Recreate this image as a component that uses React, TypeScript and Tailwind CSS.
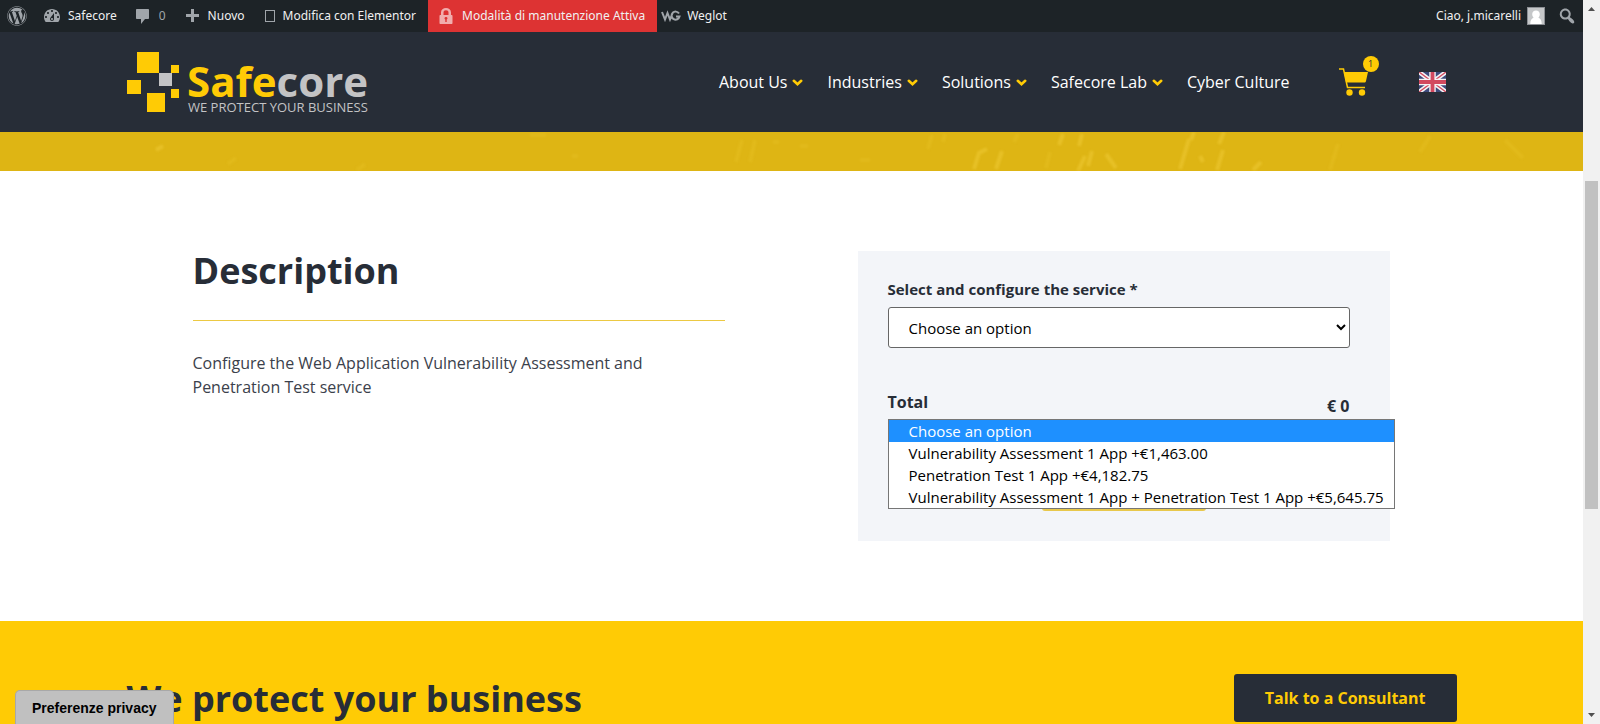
import React from 'react';
import { FaWordpress } from 'react-icons/fa';

const navLinks = [
    { label: 'About Us', hasMenu: true },
    { label: 'Industries', hasMenu: true },
    { label: 'Solutions', hasMenu: true },
    { label: 'Safecore Lab', hasMenu: true },
    { label: 'Cyber Culture', hasMenu: false },
];

const serviceOptions = [
    'Choose an option',
    'Vulnerability Assessment 1 App +€1,463.00',
    'Penetration Test 1 App +€4,182.75',
    'Vulnerability Assessment 1 App + Penetration Test 1 App +€5,645.75',
];

const dashicons = {
    dashboard:
        'M3.76 16h12.48c1.1-1.37 1.76-3.11 1.76-5 0-4.42-3.58-8-8-8s-8 3.58-8 8c0 1.89.66 3.63 1.76 5zM10 4c.55 0 1 .45 1 1s-.45 1-1 1-1-.45-1-1 .45-1 1-1zM6 6c.55 0 1 .45 1 1s-.45 1-1 1-1-.45-1-1 .45-1 1-1zm8 0c.55 0 1 .45 1 1s-.45 1-1 1-1-.45-1-1 .45-1 1-1zm-5.37 5.55L12 7v6c0 1.1-.9 2-2 2s-2-.9-2-2c0-.57.24-1.08.63-1.45zM4 10c.55 0 1 .45 1 1s-.45 1-1 1-1-.45-1-1 .45-1 1-1zm12 0c.55 0 1 .45 1 1s-.45 1-1 1-1-.45-1-1 .45-1 1-1zm-5 3c0-.55-.45-1-1-1s-1 .45-1 1 .45 1 1 1 1-.45 1-1z',
    comment: 'M4 3h11c.6 0 1 .4 1 1v8c0 .6-.4 1-1 1h-3l-4 5v-5H4c-.6 0-1-.4-1-1V4c0-.6.4-1 1-1z',
    plus: 'M17 8v3h-5v5H9v-5H4V8h5V3h3v5h5z',
    search:
        'M12.14 4.18c1.87 1.87 2.11 4.75.72 6.89.12.1.22.21.36.31.2.16.47.36.81.59.34.24.56.39.66.47.42.31.73.57.94.78.32.32.6.65.84 1 .25.35.44.69.59 1.04.14.35.21.68.18 1-.02.32-.14.59-.36.81s-.49.34-.81.36c-.31.02-.65-.04-.99-.19-.35-.14-.7-.34-1.04-.59-.35-.24-.68-.52-1-.84-.21-.21-.47-.52-.77-.93-.1-.13-.25-.35-.47-.66-.22-.32-.4-.57-.56-.78-.16-.2-.29-.35-.44-.5-2.07 1.09-4.69.76-6.44-.98-2.14-2.15-2.14-5.64 0-7.78 2.15-2.15 5.63-2.15 7.78 0zm-1.41 6.36c1.36-1.37 1.36-3.58 0-4.95-1.37-1.37-3.59-1.37-4.95 0-1.37 1.37-1.37 3.58 0 4.95 1.36 1.37 3.58 1.37 4.95 0z',
};

function Dashicon({ name }: { name: keyof typeof dashicons }) {
    return (
        <svg viewBox="0 0 20 20" className="h-5 w-5 shrink-0 fill-[#a0a5aa]" aria-hidden="true">
            <path d={dashicons[name]} fillRule="evenodd" />
        </svg>
    );
}

function AdminBar() {
    return (
        <div className="flex h-8 items-center bg-[#1d2327] pl-[7px] pr-1.5 font-['Noto_Sans','Open_Sans',sans-serif] text-xs text-[#f0f0f1]">
            <a href="#wordpress" aria-label="WordPress" className="mr-[15px]">
                <FaWordpress className="h-5 w-5 text-[#a0a5aa]" />
            </a>
            <a href="#site" className="mr-4 flex items-center gap-1.5">
                <Dashicon name="dashboard" />
                Safecore
            </a>
            <a href="#comments" className="mr-4 flex items-center gap-1.5 text-[#a0a5aa]">
                <Dashicon name="comment" />
                0
            </a>
            <a href="#new" className="mr-5 flex items-center gap-1.5">
                <Dashicon name="plus" />
                Nuovo
            </a>
            <a href="#elementor" className="mr-3 flex items-center gap-2">
                <span className="h-3 w-2.5 border border-[#a0a5aa]" />
                Modifica con Elementor
            </a>
            <a href="#maintenance" className="flex h-8 items-center gap-1.5 bg-[#dd3333] pr-3 pl-2">
                <svg viewBox="0 0 20 20" className="h-5 w-5 fill-[#f1adad]" aria-hidden="true">
                    <path
                        fillRule="evenodd"
                        d="M4.500 9H5V6.500C5 3.500 7.200 2 10 2s5 1.500 5 4.500V9h.5c.6 0 1 .4 1 1v7c0 .6-.4 1-1 1h-11c-.6 0-1-.4-1-1v-7c0-.6.4-1 1-1zm3 0h5V6.500c0-1.500-1-2.300-2.500-2.300S7.500 5 7.500 6.500V9zm1.800 7h1.400v-2.600c.5-.2.8-.6.8-1.100 0-.7-.7-1.300-1.500-1.300s-1.500.6-1.500 1.300c0 .5.3.9.8 1.100V16z"
                    />
                </svg>
                Modalità di manutenzione Attiva
            </a>
            <a href="#weglot" className="ml-1 flex items-center gap-1.5">
                <svg viewBox="0 0 20 12" className="h-3 w-5 fill-none stroke-[#a0a5aa]" strokeWidth="2" aria-hidden="true">
                    <path d="M1 2l3 7.500L6.500 3 9 9.500 12 2M18 3.500A4 4 0 1 0 18.500 6.500H15" />
                </svg>
                Weglot
            </a>
            <a href="#profile" className="ml-auto mr-3 flex items-center gap-1.5">
                Ciao, j.micarelli
                <svg viewBox="0 0 18 18" className="h-[18px] w-[18px]" aria-hidden="true">
                    <rect width="18" height="18" fill="#8c8f94" />
                    <rect x="1" y="1" width="16" height="16" fill="#c5c7c9" />
                    <path d="M9 3.500c2.300 0 3.800 1.600 3.800 3.800 0 1.600-.7 2.700-1.400 3.400 2 .6 3.300 2.600 3.300 6.300H3.300c0-3.700 1.300-5.700 3.300-6.300-.7-.7-1.400-1.800-1.400-3.400 0-2.200 1.500-3.800 3.800-3.800z" fill="#fff" />
                </svg>
            </a>
            <button type="button" aria-label="Cerca">
                <Dashicon name="search" />
            </button>
        </div>
    );
}

function Logo() {
    return (
        <a href="#home" className="shrink-0">
            <svg viewBox="0 0 240 60" className="h-[60px] w-60 overflow-visible font-['Open_Sans',sans-serif]">
                <g fill="#ffcb05">
                    <rect x="10" y="0" width="22" height="21" />
                    <rect x="0" y="28" width="14" height="14" />
                    <rect x="20" y="41" width="18" height="19" />
                    <rect x="44" y="13" width="8" height="8" />
                    <rect x="44" y="37" width="8" height="9" />
                </g>
                <rect x="32" y="21" width="13" height="13" fill="#c3c3c5" />
                <text x="60" y="45" fontSize="42" fontWeight="700" fill="#ffcb05">
                    Safe<tspan fill="#c3c3c5">core</tspan>
                </text>
                <text x="61" y="60" fontSize="13" fill="#c3c3c5">
                    WE PROTECT YOUR BUSINESS
                </text>
            </svg>
        </a>
    );
}

function MenuArrow() {
    return (
        <svg viewBox="0 0 11 11" className="h-[11px] w-[11px]" aria-hidden="true">
            <path d="M1.800 3.800L5.500 7.200l3.700-3.400" fill="none" stroke="#ffcb05" strokeWidth="2.600" strokeLinecap="round" />
        </svg>
    );
}

function Cart() {
    return (
        <a href="#cart" aria-label="Cart" className="relative mr-[50px] ml-[49px] w-[30px]">
            <svg viewBox="0 0 30 28" className="h-7 w-[30px]" fill="#ffcb05" aria-hidden="true">
                <path d="M5 4h24l-2 9c-.2 1-.8 1.500-1.800 1.500H7z" />
                <path d="M0 1h4.500l4 18.500H26" fill="none" stroke="#ffcb05" strokeWidth="1.500" />
                <circle cx="10.500" cy="24.500" r="3.200" />
                <circle cx="23" cy="24.500" r="3.200" />
            </svg>
            <span className="absolute -top-3 left-6 flex h-4 w-4 items-center justify-center rounded-full bg-[#ffcb05] text-[9px] text-[#272d37]">
                1
            </span>
        </a>
    );
}

function Flag() {
    return (
        <a href="#english" aria-label="English" className="mr-[11px]">
            <svg viewBox="0 0 27 20" className="h-5 w-[27px]" aria-hidden="true">
                <rect width="27" height="20" fill="#3d4a7c" />
                <path d="M0 0l27 20M27 0L0 20" stroke="#f4f4f6" strokeWidth="4.500" />
                <path d="M0 0l27 20M27 0L0 20" stroke="#d2495f" strokeWidth="1.400" />
                <path d="M13.500 0v20M0 10h27" stroke="#f4f4f6" strokeWidth="6.500" />
                <path d="M13.500 0v20M0 10h27" stroke="#d2495f" strokeWidth="3.800" />
            </svg>
        </a>
    );
}

function Header() {
    return (
        <header className="bg-[#272d37]">
            <div className="mx-auto flex h-[100px] max-w-[1330px] items-center">
                <Logo />
                <nav className="ml-auto flex gap-6 text-base text-white">
                    {navLinks.map((link) => (
                        <a key={link.label} href="#menu" className="flex items-center gap-[5px]">
                            {link.label}
                            {link.hasMenu && <MenuArrow />}
                        </a>
                    ))}
                </nav>
                <Cart />
                <Flag />
            </div>
        </header>
    );
}

function HeroStrip() {
    return (
        <div className="h-[39px] overflow-hidden bg-[#deb514]">
            <svg viewBox="0 0 1583 39" preserveAspectRatio="none" className="h-full w-full blur-[1px]" fill="none" aria-hidden="true">
                <g stroke="#f2cd3a" strokeWidth="4" opacity="0.5">
                    <path d="M156 18l7-4M974 37l5-16 8-4M996 37l6-18M1063 2l-4 11M1082 2l-3 12M1078 39l7-15M1092 19l-4 15M1106 22l10 14M1180 37l9-30M1194 0l-3 8M1200 24l3 6M1224 0l-5 12M1223 18l-6 20M1253 38l8-8" />
                </g>
                <g stroke="#ecc62c" strokeWidth="4" opacity="0.3">
                    <path d="M228 32l8-6M357 38l8-6M530 3h16M572 24h6M742 8l-6 22M755 8l-5 22M773 10h6M800 14h8M860 28h10M932 3l-4 14M945 2l-2 8M1018 2l-4 8M1050 20l-4 16M1338 12l-8 26M1430 4l-10 16M1505 8l18 18" />
                </g>
            </svg>
        </div>
    );
}

function ServiceForm() {
    return (
        <form className="bg-[#f3f5f9] py-[30px] pr-10 pl-[30px]">
            <label htmlFor="service" className="mb-2.5 block text-[15px] leading-4 font-bold">
                Select and configure the service *
            </label>
            <select
                id="service"
                defaultValue={serviceOptions[0]}
                className="block h-[41px] w-full rounded-[3px] border border-[#666] bg-white pl-4 font-['Open_Sans',sans-serif] text-[15px] text-black"
            >
                {serviceOptions.map((option) => (
                    <option key={option}>{option}</option>
                ))}
            </select>

            <div className="relative mt-[42px] flex h-7 justify-between font-bold">
                <span className="leading-6">Total</span>
                <span className="self-end leading-6">€ 0</span>

                {/* Opened option list */}
                <ul
                    role="listbox"
                    aria-label="Select and configure the service"
                    className="absolute top-full left-0 z-10 mt-px w-max border border-[#767676] bg-white text-[15px] font-normal text-black"
                >
                    {serviceOptions.map((option, i) => (
                        <li
                            key={option}
                            role="option"
                            aria-selected={i === 0}
                            className="pr-2.5 pl-5 leading-[22px] aria-selected:bg-[#1e90ff] aria-selected:text-white"
                        >
                            {option}
                        </li>
                    ))}
                </ul>
            </div>

            {/* Centred on the card, whose right padding is 10px wider */}
            <div className="-mr-2.5 pt-[45px]">
                <button type="button" aria-label="Add to cart" className="mx-auto block h-12 w-[164px] rounded-[3px] bg-[#e8c84c]" />
            </div>
        </form>
    );
}

function ScrollBar() {
    return (
        <div className="flex w-[17px] shrink-0 flex-col items-center bg-[#f1f1f1]" aria-hidden="true">
            <svg viewBox="0 0 17 17" className="h-[17px] w-[17px] fill-[#505050]">
                <path d="M5 11l3.500-4 3.500 4z" />
            </svg>
            <div className="flex w-[13px] flex-1 flex-col">
                <div className="grow-[164]" />
                <div className="grow-[328] bg-[#c1c1c1]" />
                <div className="grow-[198]" />
            </div>
            <svg viewBox="0 0 17 17" className="h-[17px] w-[17px] fill-[#505050]">
                <path d="M5 6l3.500 4L12 6z" />
            </svg>
        </div>
    );
}

export default function App() {
    return (
        <div className="flex h-screen overflow-hidden bg-white font-['Open_Sans',sans-serif] text-[#272d37]">
            <div className="relative min-w-0 flex-1 overflow-hidden">
                <AdminBar />
                <Header />
                <main>
                    <HeroStrip />

                    <section className="mx-auto grid max-w-[1330px] grid-cols-2 gap-[133px] py-20 pr-[67px] pl-[66px]">
                        <div>
                            <h2 className="border-b border-[#ecc943] pb-[29px] text-4xl leading-10 font-bold">Description</h2>
                            <p className="mt-[30px] max-w-[480px] text-base leading-6 text-[#3b414b]">
                                Configure the Web Application Vulnerability Assessment and Penetration Test service
                            </p>
                        </div>
                        <ServiceForm />
                    </section>

                    <section className="bg-[#ffcb05] py-[53px]">
                        <div className="mx-auto flex max-w-[1330px] items-center justify-between">
                            <h2 className="text-4xl leading-[45px] font-bold">We protect your business</h2>
                            <a href="#contact" className="rounded-[3px] bg-[#272d37] px-[31px] py-3 text-base leading-6 font-bold text-[#ffcb05]">
                                Talk to a Consultant
                            </a>
                        </div>
                    </section>
                </main>

                <button
                    type="button"
                    className="absolute bottom-0 left-[15px] h-[34px] rounded-t-[5px] border border-b-0 border-[#a8a8a8] bg-[#c0c0c0] px-4 font-['Liberation_Sans',sans-serif] text-sm font-bold text-black"
                >
                    Preferenze privacy
                </button>
            </div>
            <ScrollBar />
        </div>
    );
}
